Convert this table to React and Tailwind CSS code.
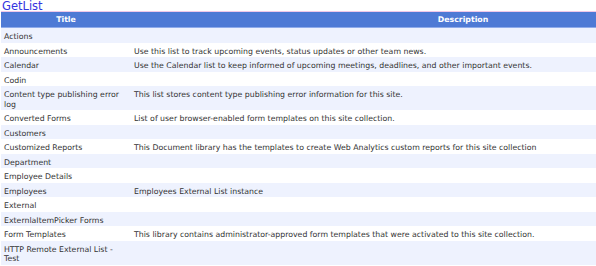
import React from 'react';

const lists = [
  { title: 'Actions', desc: '' },
  { title: 'Announcements', desc: 'Use this list to track upcoming events, status updates or other team news.' },
  { title: 'Calendar', desc: 'Use the Calendar list to keep informed of upcoming meetings, deadlines, and other important events.' },
  { title: 'Codin', desc: '' },
  { title: 'Content type publishing error log', desc: 'This list stores content type publishing error information for this site.' },
  { title: 'Converted Forms', desc: 'List of user browser-enabled form templates on this site collection.' },
  { title: 'Customers', desc: '' },
  { title: 'Customized Reports', desc: 'This Document library has the templates to create Web Analytics custom reports for this site collection' },
  { title: 'Department', desc: '' },
  { title: 'Employee Details', desc: '' },
  { title: 'Employees', desc: 'Employees External List instance' },
  { title: 'External', desc: '' },
  { title: 'ExternlaItemPicker Forms', desc: '' },
  { title: 'Form Templates', desc: 'This library contains administrator-approved form templates that were activated to this site collection.' },
  { title: 'HTTP Remote External List - Test', desc: '' },
];

export default function App() {
  return (
    <div className="w-[596px] h-[266px] overflow-hidden bg-white font-['DejaVu_Sans',Verdana,sans-serif]">
      <div className="pl-[2px] pt-[1px] h-[11px] text-[11.5px] leading-[11px] text-[#3535e0]">GetList</div>
      <table className="ml-[1px] w-[794px] border-collapse text-[7.8px] text-[#333]">
        <thead>
          <tr className="bg-[#4e7ad5] text-white border-t border-t-[#f0c8e8] border-b border-b-[#8fabea]">
            <th className="w-[130px] h-[16px] p-0 font-bold text-center">Title</th>
            <th className="h-[16px] p-0 font-bold text-center">Description</th>
          </tr>
        </thead>
        <tbody>
          {lists.map((l, i) => (
            <tr key={l.title} className={i % 2 === 0 ? 'bg-[#eef2fe]' : 'bg-white'}>
              <td className="align-top pl-[3px] pr-[4px] pt-[4px] pb-[1px] leading-[9.5px]">{l.title}</td>
              <td className="align-top pl-[3px] pt-[4px] pb-[1px] leading-[9.5px] whitespace-nowrap">{l.desc}</td>
            </tr>
          ))}
        </tbody>
      </table>
    </div>
  );
}
